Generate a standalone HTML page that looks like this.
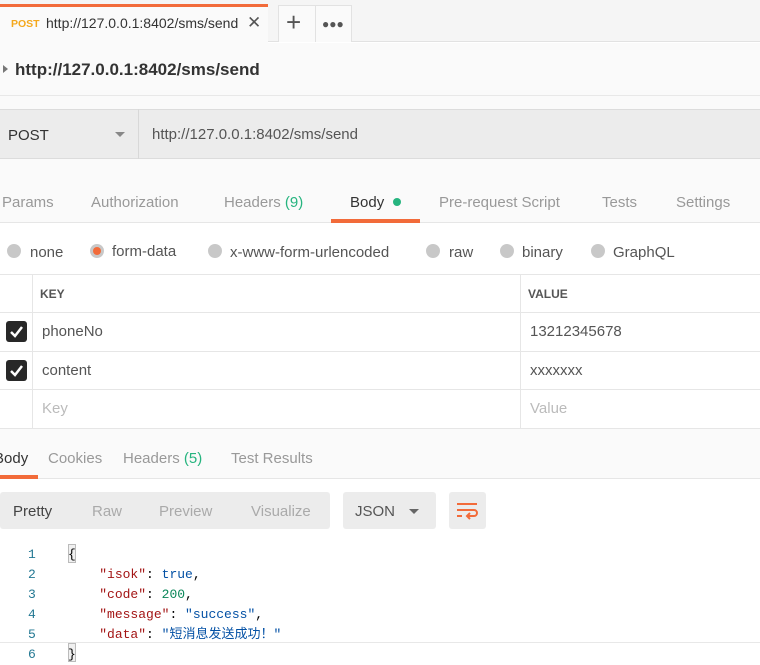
<!DOCTYPE html>
<html><head><meta charset="utf-8"><style>
*{margin:0;padding:0;box-sizing:border-box}
body{width:760px;height:656px;overflow:hidden;background:#fff;font-family:"Liberation Sans","Noto Sans CJK SC",sans-serif;color:#505050;position:relative}
.a{position:absolute;white-space:nowrap}
.mono{font-family:"Liberation Mono","Noto Sans CJK SC",monospace;font-size:13px}
</style></head><body>
<div class="a" style="left:0;top:0;width:760px;height:42px;background:#f5f5f5;border-bottom:1px solid #e2e2e2"></div>
<div class="a" style="left:0;top:4px;width:268px;height:39px;background:#fafafa;border-top:3px solid #f26b3a"></div>
<div class="a" style="left:11px;top:18px;font-size:10.5px;font-weight:bold;color:#f4a81d">POST</div>
<div class="a" style="left:46px;top:15px;font-size:14px;color:#333">http://127.0.0.1:8402/sms/send</div>
<div class="a" style="left:247px;top:13px;font-size:17px;color:#555">✕</div>
<div class="a" style="left:278px;top:5px;width:74px;height:37px;background:#fafafa;border:1px solid #e2e2e2;border-bottom:none"></div>
<div class="a" style="left:315px;top:5px;width:1px;height:37px;background:#e2e2e2"></div>
<div class="a" style="left:286px;top:7px;font-size:26px;color:#555;font-weight:300">+</div>
<div class="a" style="left:322px;top:17px;font-size:12px;color:#555;letter-spacing:0px">●●●</div>
<div class="a" style="left:0;top:43px;width:760px;height:53px;background:#fafafa;border-bottom:1px solid #e8e8e8"></div>
<div class="a" style="left:3px;top:65px;width:0;height:0;border-left:5px solid #777;border-top:4px solid transparent;border-bottom:4px solid transparent"></div>
<div class="a" style="left:15px;top:60px;font-size:17px;font-weight:bold;color:#333">http://127.0.0.1:8402/sms/send</div>
<div class="a" style="left:0;top:96px;width:760px;height:13px;background:#fafafa"></div>
<div class="a" style="left:0;top:109px;width:760px;height:50px;background:#ececec;border-top:1px solid #dcdcdc;border-bottom:1px solid #dcdcdc"></div>
<div class="a" style="left:138px;top:109px;width:1px;height:50px;background:#d8d8d8"></div>
<div class="a" style="left:8px;top:127px;font-size:15px;color:#333">POST</div>
<div class="a" style="left:115px;top:132px;border-top:5px solid #888;border-left:5px solid transparent;border-right:5px solid transparent"></div>
<div class="a" style="left:152px;top:126px;font-size:15px;color:#555">http://127.0.0.1:8402/sms/send</div>
<div class="a" style="left:0;top:159px;width:760px;height:64px;background:#fafafa;border-bottom:1px solid #e6e6e6"></div>
<div class="a" style="left:2px;top:194px;font-size:15px;color:#999">Params</div>
<div class="a" style="left:91px;top:194px;font-size:15px;color:#999">Authorization</div>
<div class="a" style="left:224px;top:194px;font-size:15px;color:#999">Headers <span style="color:#26b47f">(9)</span></div>
<div class="a" style="left:350px;top:194px;font-size:15px;color:#333">Body</div>
<div class="a" style="left:393px;top:198px;width:8px;height:8px;border-radius:50%;background:#26b47f"></div>
<div class="a" style="left:331px;top:219px;width:89px;height:4px;background:#f26b3a"></div>
<div class="a" style="left:439px;top:194px;font-size:15px;color:#999">Pre-request Script</div>
<div class="a" style="left:602px;top:194px;font-size:15px;color:#999">Tests</div>
<div class="a" style="left:676px;top:194px;font-size:15px;color:#999">Settings</div>
<div class="a" style="left:7px;top:244px;width:14px;height:14px;border-radius:50%;background:#c8c8c8"></div>
<div class="a" style="left:30px;top:244px;font-size:15px;color:#555">none</div>
<div class="a" style="left:90px;top:244px;width:14px;height:14px;border-radius:50%;background:#c8c8c8"></div>
<div class="a" style="left:93px;top:247px;width:8px;height:8px;border-radius:50%;background:#f26b3a"></div>
<div class="a" style="left:112px;top:243px;font-size:15px;color:#555">form-data</div>
<div class="a" style="left:208px;top:244px;width:14px;height:14px;border-radius:50%;background:#c8c8c8"></div>
<div class="a" style="left:230px;top:244px;font-size:15px;color:#555">x-www-form-urlencoded</div>
<div class="a" style="left:426px;top:244px;width:14px;height:14px;border-radius:50%;background:#c8c8c8"></div>
<div class="a" style="left:449px;top:244px;font-size:15px;color:#555">raw</div>
<div class="a" style="left:500px;top:244px;width:14px;height:14px;border-radius:50%;background:#c8c8c8"></div>
<div class="a" style="left:522px;top:244px;font-size:15px;color:#555">binary</div>
<div class="a" style="left:591px;top:244px;width:14px;height:14px;border-radius:50%;background:#c8c8c8"></div>
<div class="a" style="left:613px;top:244px;font-size:15px;color:#555">GraphQL</div>
<div class="a" style="left:0;top:274px;width:760px;height:1px;background:#e6e6e6"></div>
<div class="a" style="left:0;top:312px;width:760px;height:1px;background:#e6e6e6"></div>
<div class="a" style="left:0;top:351px;width:760px;height:1px;background:#e6e6e6"></div>
<div class="a" style="left:0;top:389px;width:760px;height:1px;background:#e6e6e6"></div>
<div class="a" style="left:0;top:428px;width:760px;height:1px;background:#e6e6e6"></div>
<div class="a" style="left:32px;top:274px;width:1px;height:154px;background:#e6e6e6"></div>
<div class="a" style="left:520px;top:274px;width:1px;height:154px;background:#e6e6e6"></div>
<div class="a" style="left:40px;top:287px;font-size:12px;font-weight:bold;color:#555">KEY</div>
<div class="a" style="left:528px;top:287px;font-size:12px;font-weight:bold;color:#555">VALUE</div>
<div class="a" style="left:6px;top:321px;width:21px;height:21px;border-radius:3px;background:#282828"></div>
<svg class="a" style="left:6px;top:321px" width="21" height="21"><path d="M5 11 L9 15 L16 6" stroke="#fff" stroke-width="2.5" fill="none"/></svg>
<div class="a" style="left:42px;top:323px;font-size:15px;color:#555">phoneNo</div>
<div class="a" style="left:530px;top:323px;font-size:15px;color:#555">13212345678</div>
<div class="a" style="left:6px;top:360px;width:21px;height:21px;border-radius:3px;background:#282828"></div>
<svg class="a" style="left:6px;top:360px" width="21" height="21"><path d="M5 11 L9 15 L16 6" stroke="#fff" stroke-width="2.5" fill="none"/></svg>
<div class="a" style="left:42px;top:362px;font-size:15px;color:#555">content</div>
<div class="a" style="left:530px;top:362px;font-size:15px;color:#555">xxxxxxx</div>
<div class="a" style="left:42px;top:400px;font-size:15px;color:#bbb">Key</div>
<div class="a" style="left:530px;top:400px;font-size:15px;color:#bbb">Value</div>
<div class="a" style="left:0;top:429px;width:760px;height:50px;background:#fafafa;border-bottom:1px solid #e6e6e6"></div>
<div class="a" style="left:-6px;top:450px;font-size:15px;color:#333">Body</div>
<div class="a" style="left:0;top:475px;width:38px;height:4px;background:#f26b3a"></div>
<div class="a" style="left:48px;top:450px;font-size:15px;color:#999">Cookies</div>
<div class="a" style="left:123px;top:450px;font-size:15px;color:#999">Headers <span style="color:#26b47f">(5)</span></div>
<div class="a" style="left:231px;top:450px;font-size:15px;color:#999">Test Results</div>
<div class="a" style="left:0;top:492px;width:330px;height:37px;border-radius:3px;background:#ececec"></div>
<div class="a" style="left:13px;top:503px;font-size:15px;color:#444">Pretty</div>
<div class="a" style="left:92px;top:503px;font-size:15px;color:#aaa">Raw</div>
<div class="a" style="left:159px;top:503px;font-size:15px;color:#aaa">Preview</div>
<div class="a" style="left:251px;top:503px;font-size:15px;color:#aaa">Visualize</div>
<div class="a" style="left:343px;top:492px;width:93px;height:37px;border-radius:3px;background:#ececec"></div>
<div class="a" style="left:355px;top:503px;font-size:15px;color:#555">JSON</div>
<div class="a" style="left:409px;top:509px;border-top:5px solid #666;border-left:5px solid transparent;border-right:5px solid transparent"></div>
<div class="a" style="left:449px;top:492px;width:37px;height:37px;border-radius:3px;background:#ececec"></div>
<svg class="a" style="left:449px;top:492px" width="37" height="37"><g stroke="#f26b3a" stroke-width="2" fill="none"><path d="M8 12 H28"/><path d="M8 18 H25 A3 3 0 0 1 25 24 H18"/><path d="M21 21 L18 24 L21 27"/><path d="M8 24 H13"/></g></svg>
<div class="a" style="left:0;top:642px;width:760px;height:1px;background:#e8e8e8"></div>
<div class="a mono" style="left:28px;top:545px;line-height:20px;color:#237893">1<br>2<br>3<br>4<br>5<br>6</div>
<div class="a" style="left:68px;top:544px;width:8px;height:19px;border:1px solid #bbb;background:#f0f0f0"></div>
<div class="a" style="left:68px;top:643px;width:8px;height:19px;border:1px solid #bbb;background:#f0f0f0"></div>
<div class="a mono" style="left:68px;top:545px;line-height:20px;color:#000;white-space:pre">{
    <span style="color:#a31515">"isok"</span>: <span style="color:#0451a5">true</span>,
    <span style="color:#a31515">"code"</span>: <span style="color:#098658">200</span>,
    <span style="color:#a31515">"message"</span>: <span style="color:#0451a5">"success"</span>,
    <span style="color:#a31515">"data"</span>: <span style="color:#0451a5">"短消息发送成功！"</span>
}</div>
</body></html>
